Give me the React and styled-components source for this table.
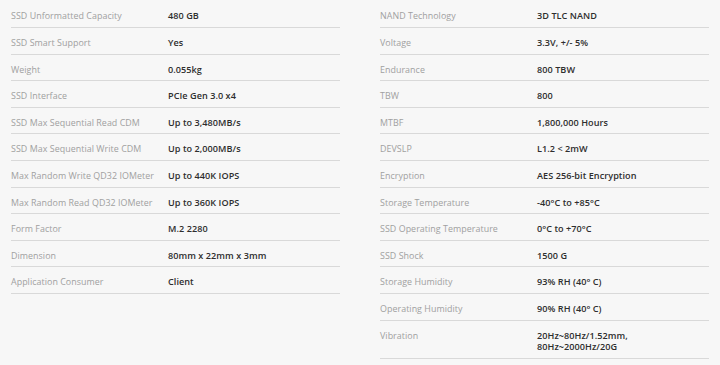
import React from "react";
import styled, { createGlobalStyle } from "styled-components";

const Global = createGlobalStyle`
  html, body { margin: 0; padding: 0; background: #f7f7f7; }
  body { font-family: "Open Sans", "Liberation Sans", sans-serif; }
`;

const Page = styled.div`
  display: grid;
  grid-template-columns: 329px 329px;
  column-gap: 40px;
  align-items: start;
  padding: 1.4px 0 0 11px;
  background: #f7f7f7;
  min-height: 365px;
  box-sizing: border-box;
`;

const Table = styled.div`
  display: flex;
  flex-direction: column;
`;

const Row = styled.div`
  display: grid;
  grid-template-columns: 157px 1fr;
  align-items: start;
  padding: 9px 0 5px;
  border-bottom: 1px solid #d9d9d9;
`;

const Label = styled.div`
  color: #a0a0a0;
  font-size: 8.9px;
  line-height: 11.6px;
  font-weight: 500;
  letter-spacing: 0.05px;
`;

const Value = styled.div`
  color: #2e2e2e;
  font-size: 9.1px;
  font-weight: 600;
  letter-spacing: 0.05px;
  white-space: pre-line;
  line-height: 11.6px;
`;

const left = [
  ["SSD Unformatted Capacity", "480 GB"],
  ["SSD Smart Support", "Yes"],
  ["Weight", "0.055kg"],
  ["SSD Interface", "PCIe Gen 3.0 x4"],
  ["SSD Max Sequential Read CDM", "Up to 3,480MB/s"],
  ["SSD Max Sequential Write CDM", "Up to 2,000MB/s"],
  ["Max Random Write QD32 IOMeter", "Up to 440K IOPS"],
  ["Max Random Read QD32 IOMeter", "Up to 360K IOPS"],
  ["Form Factor", "M.2 2280"],
  ["Dimension", "80mm x 22mm x 3mm"],
  ["Application Consumer", "Client"],
];

const right = [
  ["NAND Technology", "3D TLC NAND"],
  ["Voltage", "3.3V, +/- 5%"],
  ["Endurance", "800 TBW"],
  ["TBW", "800"],
  ["MTBF", "1,800,000 Hours"],
  ["DEVSLP", "L1.2 < 2mW"],
  ["Encryption", "AES 256-bit Encryption"],
  ["Storage Temperature", "-40°C to +85°C"],
  ["SSD Operating Temperature", "0°C to +70°C"],
  ["SSD Shock", "1500 G"],
  ["Storage Humidity", "93% RH (40° C)"],
  ["Operating Humidity", "90% RH (40° C)"],
  ["Vibration", "20Hz~80Hz/1.52mm,\n80Hz~2000Hz/20G"],
];

const SpecTable = ({ rows }) => (
  <Table>
    {rows.map(([k, v]) => (
      <Row key={k}>
        <Label>{k}</Label>
        <Value>{v}</Value>
      </Row>
    ))}
  </Table>
);

export default function App() {
  return (
    <>
      <Global />
      <Page>
        <SpecTable rows={left} />
        <SpecTable rows={right} />
      </Page>
    </>
  );
}
